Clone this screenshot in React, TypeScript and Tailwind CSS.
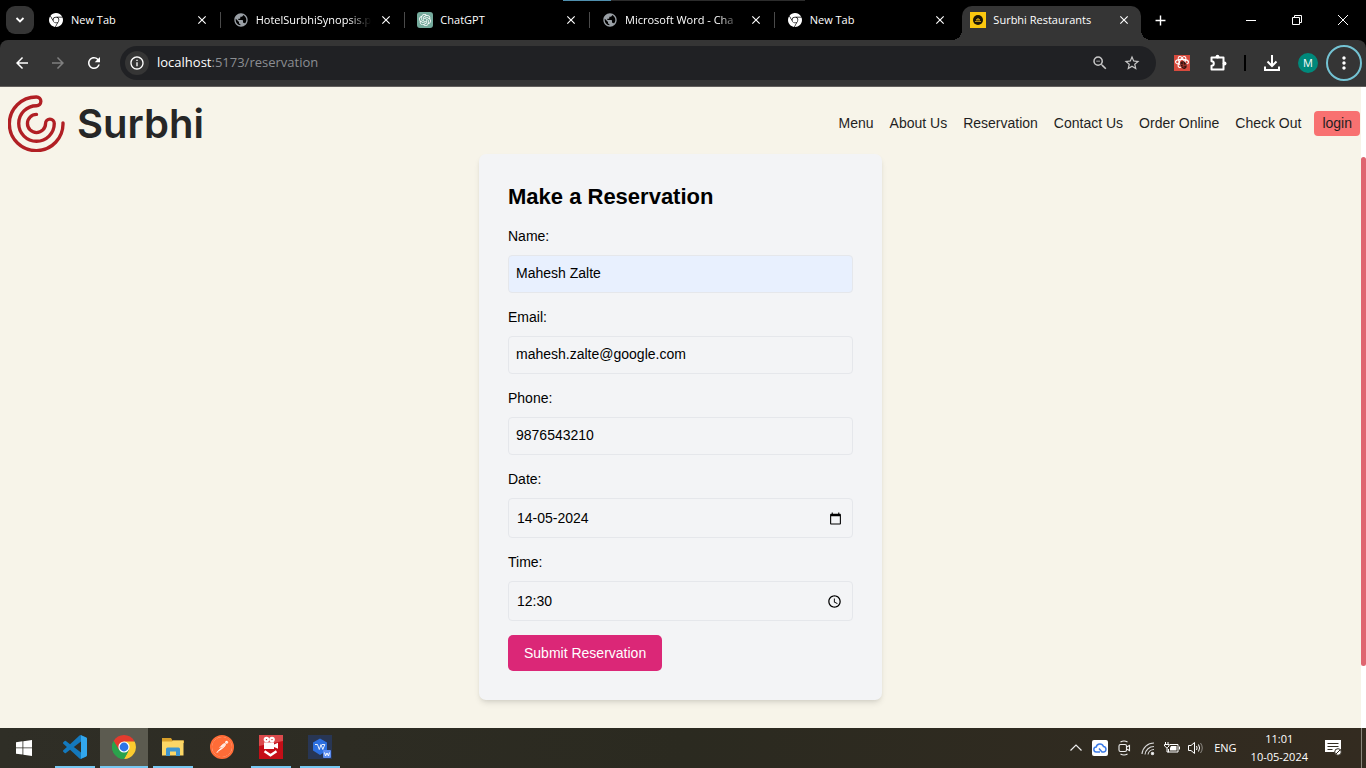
import React, { useState } from "react";
import {
  MdAccessTime,
  MdAdd,
  MdArrowBack,
  MdArrowForward,
  MdCalendarToday,
  MdClose,
  MdInfoOutline,
  MdMoreVert,
  MdPublic,
  MdRefresh,
  MdStarBorder,
  MdZoomOut,
} from "react-icons/md";
import { SiGooglechrome, SiOpenai, SiPostman } from "react-icons/si";

const tabFont = "font-['Open_Sans','Noto_Sans',sans-serif]";

type TabInfo = { title: string; icon: React.ReactNode; active?: boolean; faded?: boolean; line?: boolean };

const chromeGlyph = <SiGooglechrome className="size-[14px] text-white" />;
const globeGlyph = <MdPublic className="size-4 text-[#9aa0a6]" />;

const tabs: TabInfo[] = [
  { title: "New Tab", icon: chromeGlyph, line: true },
  { title: "HotelSurbhiSynopsis.p", icon: globeGlyph, faded: true, line: true },
  {
    title: "ChatGPT",
    icon: (
      <span className="flex size-4 items-center justify-center rounded-[3px] bg-[#74aa9c]">
        <SiOpenai className="size-3 text-white" />
      </span>
    ),
    line: true,
  },
  { title: "Microsoft Word - Cha", icon: globeGlyph, faded: true, line: true },
  { title: "New Tab", icon: chromeGlyph },
  {
    title: "Surbhi Restaurants",
    active: true,
    icon: (
      <svg viewBox="0 0 16 16" className="size-4">
        <rect width="16" height="16" fill="#fbc80f" />
        <circle cx="8" cy="8" r="5" fill="#1b1606" />
        <path d="M5 9.5h6M6 8q2-3 4 0z" stroke="#b88e12" strokeWidth="1" fill="#b88e12" />
      </svg>
    ),
  },
];

function Tab({ tab }: { tab: TabInfo }) {
  return (
    <div
      className={
        tab.active
          ? "relative mx-[3px] mt-[6px] flex min-w-0 flex-1 items-center rounded-t-[10px] bg-[#353535] pr-[10px] pl-2 pb-[6px]"
          : "relative flex min-w-0 flex-1 items-center pr-3 pl-3"
      }
    >
      {tab.active && (
        <>
          <span className="absolute bottom-0 -left-[10px] size-[10px] bg-[radial-gradient(circle_at_0_0,#000_10px,#353535_10px)]" />
          <span className="absolute -right-[10px] bottom-0 size-[10px] bg-[radial-gradient(circle_at_100%_0,#000_10px,#353535_10px)]" />
        </>
      )}
      <span className="flex size-4 shrink-0 items-center justify-center">{tab.icon}</span>
      <span
        className={
          tab.faded
            ? "ml-[7px] min-w-0 flex-1 mask-r-from-80% text-[11px] whitespace-nowrap"
            : "ml-[7px] min-w-0 flex-1 text-[11px] whitespace-nowrap"
        }
      >
        {tab.title}
      </span>
      <button type="button" aria-label="Close tab" className="ml-2 shrink-0">
        <MdClose className="size-[14px]" />
      </button>
      {tab.line && <span className="absolute top-3 right-0 h-4 w-px bg-[#4a4a4a]" />}
    </div>
  );
}

function TabStrip() {
  return (
    <div className="relative flex h-10 shrink-0 bg-black text-white">
      <div className="absolute top-0 left-[563px] flex h-px w-[242px] bg-[#2c2c2c]">
        <span className="h-px w-12 bg-[#4f8fae]" />
      </div>
      <button
        type="button"
        aria-label="Search tabs"
        className="mt-[6px] ml-[6px] flex size-7 shrink-0 items-center justify-center rounded-[9px] bg-[#353535]"
      >
        <svg viewBox="0 0 10 10" className="size-[10px]" fill="none" stroke="white" strokeWidth="1.8">
          <path d="M1.5 3l3.5 3.5L8.500 3" />
        </svg>
      </button>
      <div className="ml-[2px] flex max-w-[1108px] min-w-0 flex-1">
        {tabs.map((tab, i) => (
          <Tab key={i} tab={tab} />
        ))}
      </div>
      <button type="button" aria-label="New tab" className="ml-2 shrink-0">
        <MdAdd className="size-[17px]" />
      </button>
      <div className="ml-auto flex shrink-0">
        <button type="button" aria-label="Minimize" className="flex w-[46px] items-center justify-center">
          <svg viewBox="0 0 10 10" className="size-[10px]" stroke="white">
            <path d="M0 5.500h10" />
          </svg>
        </button>
        <button type="button" aria-label="Restore" className="flex w-[46px] items-center justify-center">
          <svg viewBox="0 0 10 10" className="size-[10px]" stroke="white" fill="none">
            <path d="M.5 2.500h7v7h-7zM2.500 2.500v-2h7v7h-2" />
          </svg>
        </button>
        <button type="button" aria-label="Close" className="flex w-[46px] items-center justify-center">
          <svg viewBox="0 0 10 10" className="size-[10px]" stroke="white">
            <path d="M0 0l10 10M10 0L0 10" />
          </svg>
        </button>
      </div>
    </div>
  );
}

function BarButton({ label, children }: { label: string; children: React.ReactNode }) {
  return (
    <button type="button" aria-label={label} className="flex size-9 shrink-0 items-center justify-center">
      {children}
    </button>
  );
}

function Toolbar() {
  return (
    <div className="shrink-0 bg-black text-white">
      <div className="flex h-[47px] items-center rounded-t-[8px] border-b border-[#625f5c] bg-[#353535] px-1">
        <BarButton label="Back">
          <MdArrowBack className="size-[18px]" />
        </BarButton>
        <BarButton label="Forward">
          <MdArrowForward className="size-[18px] text-[#7f7f7f]" />
        </BarButton>
        <BarButton label="Reload">
          <MdRefresh className="size-[18px]" />
        </BarButton>
        <div className="mx-2 flex h-[34px] min-w-0 flex-1 items-center rounded-full bg-[#202124] pr-[15px] pl-[5px]">
          <span className="flex size-6 shrink-0 items-center justify-center rounded-full bg-[#353535]">
            <MdInfoOutline className="size-4" />
          </span>
          <span className="ml-2 min-w-0 flex-1 truncate text-[13px]">
            localhost<span className="text-[#8b8e92]">:5173/reservation</span>
          </span>
          <MdZoomOut className="size-[18px] text-[#c7c7c7]" />
          <MdStarBorder className="ml-[14px] size-[18px] text-[#c7c7c7]" />
        </div>
        <BarButton label="React tools">
          <svg viewBox="0 0 16 16" className="size-4" fill="none">
            <rect width="16" height="16" fill="#d84b3e" />
            <g stroke="#fff" strokeWidth="1.1">
              <ellipse cx="8" cy="7" rx="6.500" ry="2.600" />
              <ellipse cx="8" cy="7" rx="6" ry="2.500" transform="rotate(60 8 7)" />
              <ellipse cx="8" cy="7" rx="6" ry="2.500" transform="rotate(120 8 7)" />
            </g>
            <ellipse cx="9.500" cy="10" rx="3" ry="4" fill="#35120f" transform="rotate(-25 9.500 10)" />
            <path d="M6 9l7 2M7 12l6-3M9 6l1 7" stroke="#a3352b" strokeWidth=".8" />
          </svg>
        </BarButton>
        <BarButton label="Extensions">
          <svg viewBox="0 0 18 18" className="size-[18px]" fill="none">
            <path
              d="M2.500 3.500h12v12h-12v-3.700a2.300 2.300 0 0 0 0-4.600z"
              stroke="white"
              strokeWidth="2"
              strokeLinejoin="round"
            />
            <circle cx="8.500" cy="2.600" r="1.900" fill="white" />
            <circle cx="15.600" cy="9.500" r="1.900" fill="white" />
          </svg>
        </BarButton>
        <span className="mx-2 h-4 w-[2px] shrink-0 bg-black" />
        <BarButton label="Downloads">
          <svg viewBox="0 0 16 16" className="size-4" fill="none" stroke="white" strokeWidth="2">
            <path d="M8 0v10M3.500 6.500L8 11l4.500-4.500M1 11.500V15h14v-3.500" />
          </svg>
        </BarButton>
        <BarButton label="Profile">
          <span className="flex size-5 items-center justify-center rounded-full bg-[#00897b] text-[11px]">M</span>
        </BarButton>
        <button
          type="button"
          aria-label="Menu"
          className="flex size-9 shrink-0 items-center justify-center rounded-full border-2 border-[#74c3d3]"
        >
          <MdMoreVert className="size-5" />
        </button>
      </div>
    </div>
  );
}

const links = ["Menu", "About Us", "Reservation", "Contact Us", "Order Online", "Check Out"];

function SiteHeader() {
  return (
    <header className="flex items-center justify-between pt-2 pr-px pb-[2px] pl-2">
      <a href="#home" className="flex items-center gap-3">
        <svg viewBox="23 25 170 170" className="size-[57px]" fill="none" stroke="#b11f24" strokeWidth="10" strokeLinecap="round">
          <path d="M187 108A80 80 0 1 1 108 31A13 13 0 0 1 108 57A53 53 0 1 0 161 110A13 13 0 0 0 135 110A27 27 0 1 1 108 83" />
        </svg>
        <span className="font-['Inter',sans-serif] text-[40px] leading-[56px] font-semibold text-[#262626]">Surbhi</span>
      </a>
      <nav className="flex items-center gap-4 text-[14px] text-[#1f1f1f]">
        {links.map((l) => (
          <a key={l} href={"#" + l}>
            {l}
          </a>
        ))}
        <button type="button" className="-ml-[3px] rounded-[4px] bg-[#f87171] px-2 leading-[25px]">
          login
        </button>
      </nav>
    </header>
  );
}

type FieldProps = {
  id: string;
  label: string;
  type?: string;
  initial: string;
  filled?: boolean;
  picker?: React.ReactNode;
};

function Field({ id, label, type = "text", initial, filled, picker }: FieldProps) {
  const [value, setValue] = useState(initial);
  return (
    <div className="mb-[14px]">
      <label htmlFor={id} className="mb-[9px] block leading-[20px]">
        {label}
      </label>
      {picker ? (
        <div className="flex h-10 items-center rounded-[4px] border border-[#e5e7eb] pr-2 pl-2">
          <input
            id={id}
            type="text"
            value={value}
            onChange={(e) => setValue(e.target.value)}
            className="min-w-0 flex-1 bg-transparent outline-none"
          />
          <button type="button" aria-label={"Pick " + id}>
            {picker}
          </button>
        </div>
      ) : (
        <input
          id={id}
          type={type}
          value={value}
          onChange={(e) => setValue(e.target.value)}
          className={
            filled
              ? "block h-[38px] w-full rounded-[4px] border border-[#e5e7eb] bg-[#e8f0fe] px-[7px] pb-[2px] outline-none"
              : "block h-[38px] w-full rounded-[4px] border border-[#e5e7eb] bg-transparent px-[7px] pb-[2px] outline-none"
          }
        />
      )}
    </div>
  );
}

function ReservationCard() {
  return (
    <main className="mx-auto w-full max-w-[403px] rounded-[7px] bg-[#f3f4f6] px-[29px] py-[29px] text-[14px] text-black shadow-md">
      <h2 className="mb-4 text-[22px] leading-[27px] font-bold">Make a Reservation</h2>
      <form onSubmit={(e) => e.preventDefault()}>
        <Field id="name" label="Name:" initial="Mahesh Zalte" filled />
        <Field id="email" label="Email:" type="email" initial="mahesh.zalte@google.com" />
        <Field id="phone" label="Phone:" type="tel" initial="9876543210" />
        <Field id="date" label="Date:" initial="14-05-2024" picker={<MdCalendarToday className="mr-[2px] size-[13px]" />} />
        <Field id="time" label="Time:" initial="12:30" picker={<MdAccessTime className="mr-[2px] size-[15px]" />} />
        <button type="submit" className="h-9 rounded-[5px] bg-[#db2777] px-4 text-white">
          Submit Reservation
        </button>
      </form>
    </main>
  );
}

const apps: { name: string; state: "idle" | "open" | "active"; icon: React.ReactNode }[] = [
  {
    name: "Code editor",
    state: "open",
    icon: (
      <svg viewBox="0 0 24 24" className="size-6">
        <path
          fill="#1479bd"
          d="M23.15 2.587L18.21.21a1.494 1.494 0 0 0-1.705.29l-9.46 8.63-4.12-3.128a.999.999 0 0 0-1.276.057L.327 7.261A1 1 0 0 0 .326 8.740L3.899 12 .326 15.260a1 1 0 0 0 .001 1.479L1.650 17.940a.999.999 0 0 0 1.276.057l4.120-3.128 9.460 8.630a1.492 1.492 0 0 0 1.704.290l4.942-2.377A1.500 1.500 0 0 0 24 20.060V3.939a1.500 1.500 0 0 0-.850-1.352zm-5.146 14.861L10.826 12l7.178-5.448v10.896z"
        />
        <path fill="#32a7ee" d="M18 .2l5.150 2.387q.85.400.85 1.352V20.060q0 .95-.85 1.352L18 23.800z" />
      </svg>
    ),
  },
  {
    name: "Browser",
    state: "active",
    icon: (
      <svg viewBox="0 0 24 24" className="size-6">
        <path d="M12 12L1.610 6A12 12 0 0 1 22.390 6z" fill="#e33b2e" />
        <path d="M12 12L1.610 6A12 12 0 0 0 12 24l5-9z" fill="#2aa24c" />
        <path d="M12 6.500h10.600A12 12 0 0 1 12 24l5-9z" fill="#fccb2f" />
        <path d="M1.610 6H12v6l-5 3z" fill="#e33b2e" />
        <path d="M1.610 6L7 15l5 3 4-1-4 7A12 12 0 0 1 1.610 6z" fill="#2aa24c" />
        <circle cx="12" cy="12" r="5.600" fill="#fff" />
        <circle cx="12" cy="12" r="4.400" fill="#2f75e8" />
      </svg>
    ),
  },
  {
    name: "Files",
    state: "open",
    icon: (
      <svg viewBox="0 0 24 24" className="size-6">
        <path d="M1 3h9l1.500 2.500H23V8H1z" fill="#d9a02b" />
        <path d="M1 6.500h10l1-1h10.500v15H1z" fill="#fbd666" />
        <path d="M5 21v-7q0-1.500 1.500-1.500h11q1.500 0 1.500 1.500v7h-4v-4.500H9V21z" fill="#3d95d0" />
      </svg>
    ),
  },
  {
    name: "API client",
    state: "idle",
    icon: (
      <span className="flex size-6 rounded-full border-2 border-[#ff6c37] bg-white">
        <SiPostman className="size-5 text-[#ff6c37]" />
      </span>
    ),
  },
  {
    name: "Recorder",
    state: "open",
    icon: (
      <svg viewBox="0 0 24 24" className="size-6">
        <rect width="24" height="24" fill="#c40e17" />
        <path d="M0 0h24v6L0 11z" fill="#dc4a4c" />
        <g fill="#fff">
          <circle cx="7.500" cy="4.600" r="2.800" />
          <circle cx="13" cy="4.600" r="2.800" />
          <path d="M5 7.500h10V9.500L19 7.800v6L15 12v2H5z" />
        </g>
        <circle cx="7.500" cy="4.600" r=".7" fill="#c40e17" />
        <circle cx="13" cy="4.600" r=".7" fill="#c40e17" />
        <path d="M5.500 16.200l6 4 6-4" stroke="#fff" strokeWidth="2.400" fill="none" />
      </svg>
    ),
  },
  {
    name: "Office",
    state: "open",
    icon: (
      <svg viewBox="0 0 24 24" className="size-6">
        <rect width="24" height="24" fill="#283654" />
        <path d="M12 3.500l7 4v8l-7 4.500-7-4.500v-8z" fill="#2c6fdf" />
        <path d="M7 9.500h2.500l1.800 5L13 9.500l1.800 5 2-5H14" stroke="#fff" strokeWidth=".9" fill="none" />
        <rect x="15" y="15" width="8" height="8" rx="1" fill="#5c8df0" />
        <path d="M16.500 17.500l1 3.500 1.500-3 1.500 3 1-3.500" stroke="#fff" fill="none" />
      </svg>
    ),
  },
];

function Taskbar() {
  return (
    <footer className="flex h-10 shrink-0 items-stretch bg-linear-to-r from-[#2f2e26] via-[#2b2a20] to-[#332b20] text-[11px] text-white">
      <button type="button" aria-label="Start" className="mr-[2px] flex w-12 items-center justify-center">
        <svg viewBox="0 0 16 16" className="size-4" fill="white">
          <path d="M0 2.200L6.500 1.300v6.200H0zM7.300 1.200L16 0v7.500H7.300zM0 8.300h6.500v6.300L0 13.700zM7.300 8.300H16V16l-8.700-1.200z" />
        </svg>
      </button>
      {apps.map((app) => (
        <button
          key={app.name}
          type="button"
          aria-label={app.name}
          className={
            app.state === "active"
              ? "ml-px flex w-12 flex-col items-center bg-[#5c5b50]"
              : "ml-px flex w-12 flex-col items-center"
          }
        >
          <span className="flex flex-1 items-center">{app.icon}</span>
          {app.state === "active" && <span className="h-[2px] w-full bg-[#76c8f2]" />}
          {app.state === "open" && <span className="h-[2px] w-10 bg-[#76c8f2]" />}
          {app.state === "idle" && <span className="h-[2px]" />}
        </button>
      ))}
      <div className="ml-auto flex items-center gap-2">
        <svg viewBox="0 0 16 16" className="size-4" fill="none" stroke="#eee" strokeWidth="1.2">
          <path d="M2.500 10.500L8 5l5.500 5.500" />
        </svg>
        <svg viewBox="0 0 16 16" className="size-4" fill="none">
          <rect width="16" height="16" rx="2" fill="#fff" />
          <path d="M8 12H4.500a2.500 2.500 0 0 1-.3-5A3.800 3.800 0 0 1 11.500 6.500a2.800 2.800 0 0 1 .3 5.500H10L7 8.500" stroke="#3c7be8" strokeWidth="1.500" />
        </svg>
        <svg viewBox="0 0 16 16" className="size-4" fill="none" stroke="#eee" strokeWidth="1.100">
          <rect x="3" y="4.500" width="7.500" height="7" rx="1.500" />
          <path d="M10.500 7l3-1.500v5l-3-1.500M4.500 2Q8 0 11.500 2M4.500 14q3.500 2 7 0" />
        </svg>
        <svg viewBox="0 0 16 16" className="size-4" fill="none" stroke="#d8d8d8" strokeWidth="1.100">
          <path d="M2 14A12 12 0 0 1 14 3M5 14.500A9 9 0 0 1 14 6.500M8 14.500A6 6 0 0 1 14 9.500" />
          <circle cx="12.500" cy="13.500" r="1.200" fill="#fff" />
        </svg>
        <svg viewBox="0 0 16 16" className="size-4" fill="none" stroke="#fff">
          <path d="M5.500 4.500h8.500v7.500H4.500V9M15.500 6.500v3M1.500 2v2M4 2v2M.5 4.500h4.500v1.500L3.500 7.500h-1L.5 6zM3 7.500V12h2" />
          <path d="M7 6h5.500v4.500H6V8z" fill="#fff" stroke="none" />
        </svg>
        <svg viewBox="0 0 16 16" className="size-4" fill="none" stroke="#fff">
          <path d="M.5 5.500H3l3.500-3v11L3 10.500H.5z" />
          <path d="M8.500 6q1.200 2 0 4M10.500 4.500q2.200 3.500 0 7" />
          <path d="M12.500 3q3.500 5 0 10" opacity=".45" />
        </svg>
        <span className="ml-[2px]">ENG</span>
        <div className="ml-[6px] text-center leading-[18px]">
          <div>11:01</div>
          <div>10-05-2024</div>
        </div>
        <svg viewBox="0 0 18 18" className="ml-2 size-[18px]">
          <path d="M1 1h16v12h-3v3.500L10.500 13H1z" fill="#fff" />
          <path d="M3.500 4.500h11M3.500 7.500h11M3.500 10.500h5" stroke="#332d22" strokeWidth="1.200" />
          <circle cx="14" cy="13" r="3.300" fill="#fff" stroke="#332d22" />
          <path d="M11.800 15.200l4.400-4.400" stroke="#332d22" />
        </svg>
        <span className="mr-1 ml-[11px] h-10 w-px shrink-0 bg-[#8a867c]" />
      </div>
    </footer>
  );
}

export default function App() {
  return (
    <div className={"flex h-screen flex-col overflow-hidden " + tabFont}>
      <TabStrip />
      <Toolbar />
      <div className="flex min-h-0 flex-1 font-['Liberation_Sans',Arial,sans-serif]">
        <div className="min-w-0 flex-1 overflow-hidden bg-[#f7f4e9]">
          <SiteHeader />
          <ReservationCard />
        </div>
        <div className="flex w-[5px] flex-col bg-white pt-[70px] pb-[62px]">
          <span className="flex-1 rounded-[3px] bg-[#df6570]" />
        </div>
      </div>
      <Taskbar />
    </div>
  );
}
